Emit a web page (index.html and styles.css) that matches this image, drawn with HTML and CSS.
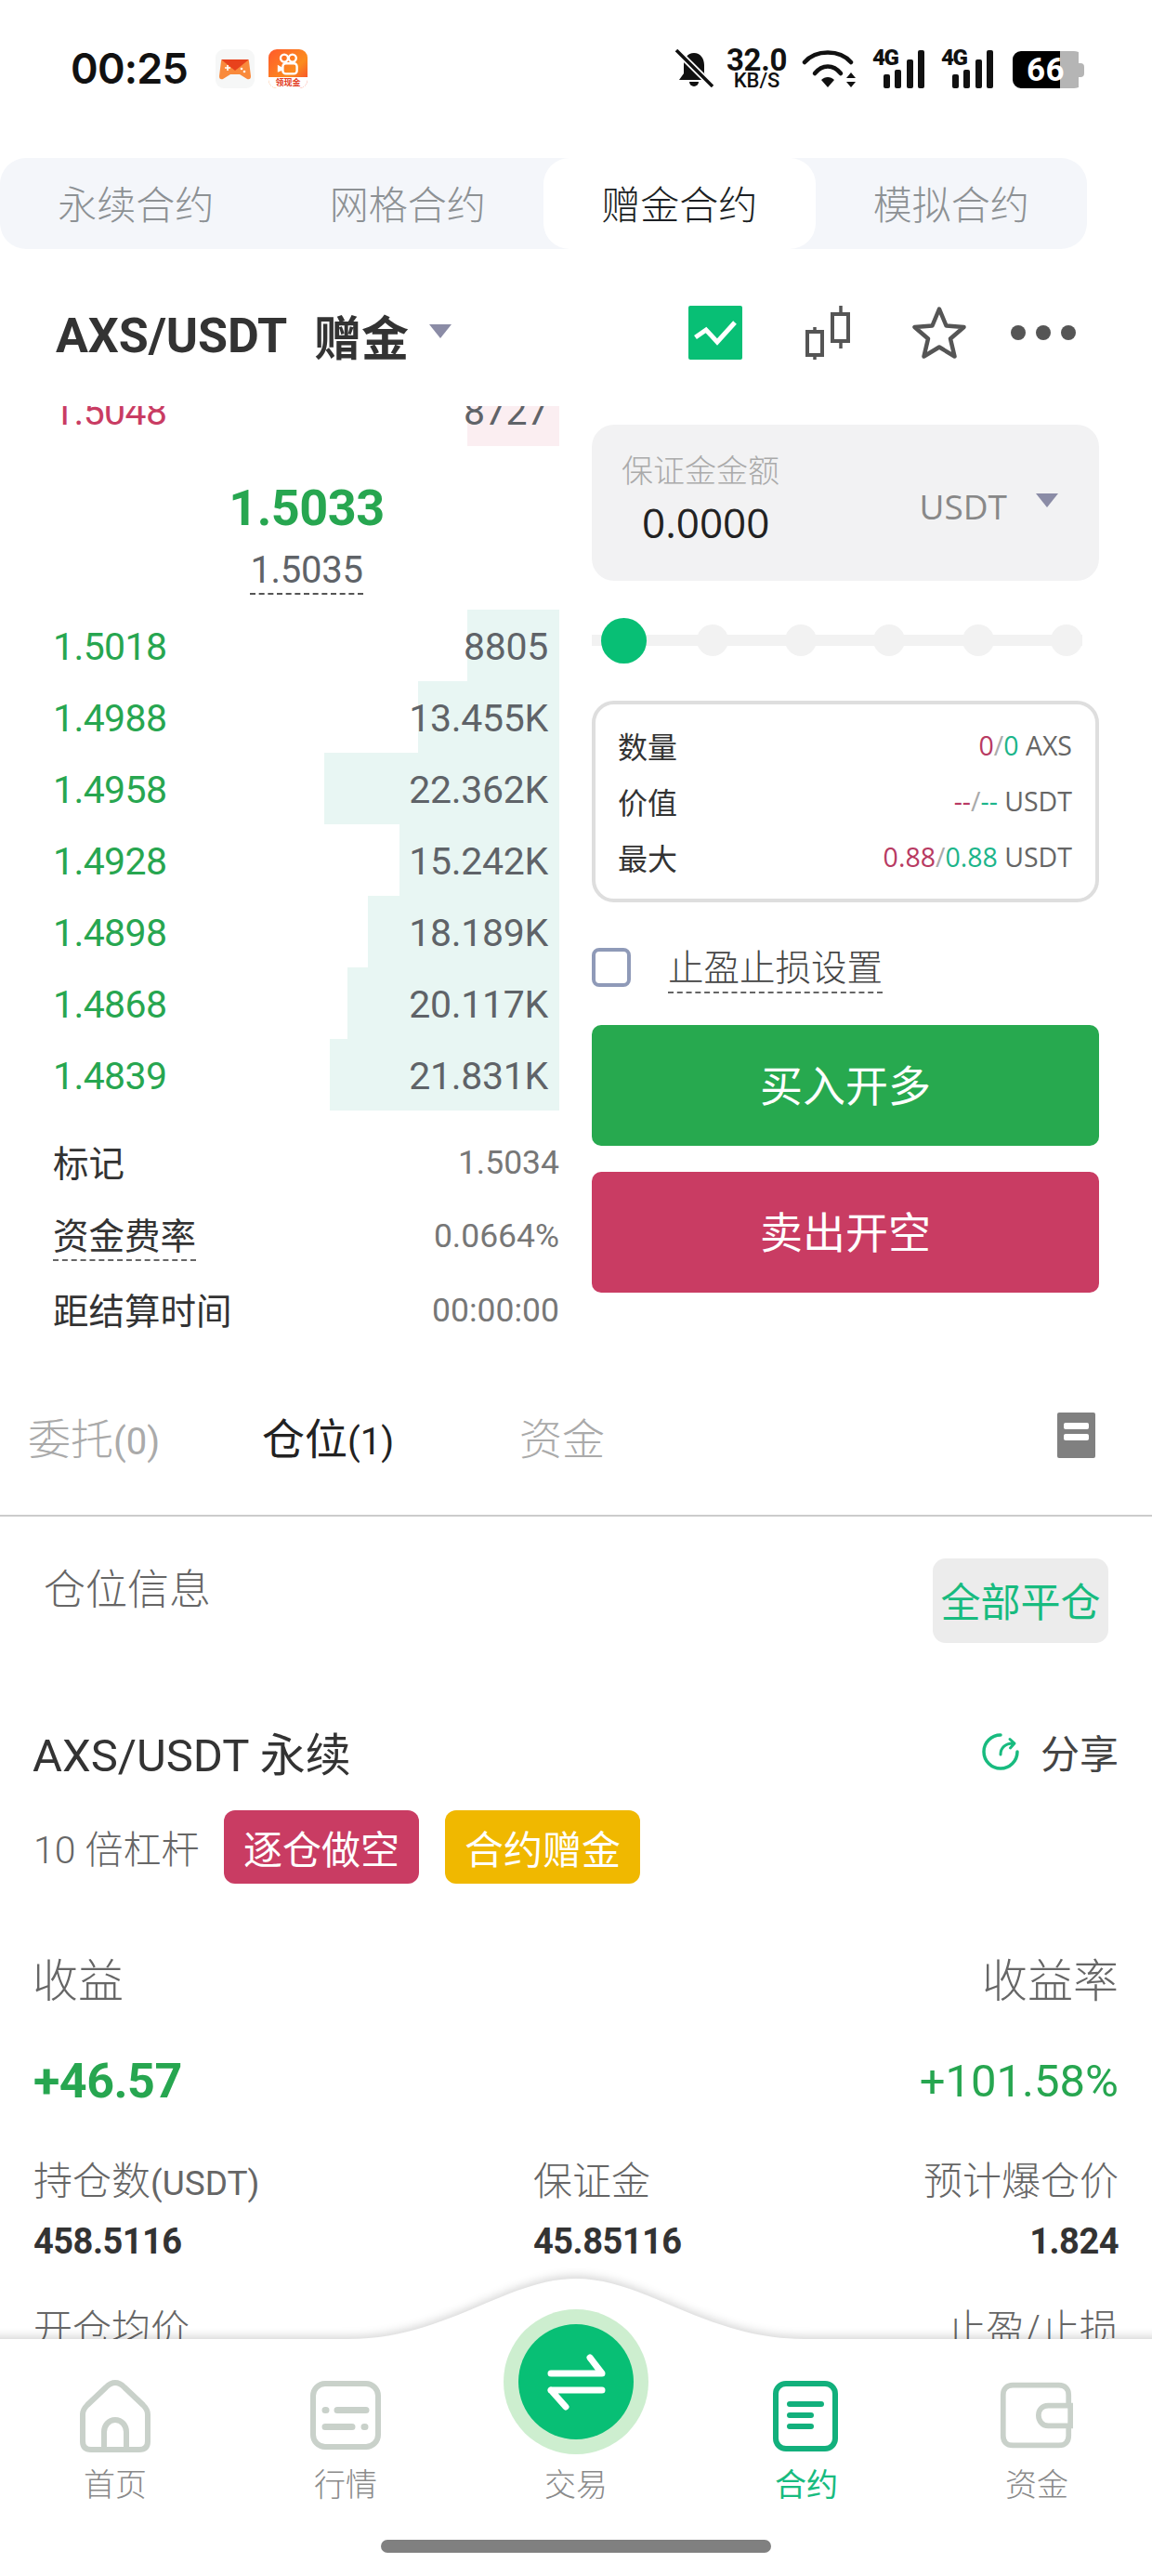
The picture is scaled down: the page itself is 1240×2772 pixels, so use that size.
FILE: index.html
```html
<!DOCTYPE html>
<html lang="zh">
<head>
<meta charset="utf-8">
<title>AXS/USDT 赠金合约</title>
<link rel="stylesheet" href="styles.css">
</head>
<body>
<div class="page">
  <header class="status">
    <div class="status-left">
      <span class="time">00:25</span>
      <svg class="app game" viewBox="0 0 42 42"><rect width="42" height="42" rx="9" fill="#f6f7f7"/><path d="M6 13Q6 11 8 11H34Q36 11 36 13L38 29Q38 33 34 32L26 27H16L8 32Q4 33 4 29Z" fill="#f98a3c"/><path d="M6 11H36L21 23Z" fill="#e8421c"/><path d="M10 20h6M13 17v6" stroke="#fff" stroke-width="1.6"/><circle cx="28" cy="21" r="1.3" fill="#fff"/><circle cx="31" cy="24" r="1.3" fill="#fff"/></svg>
      <div class="app kuai">
        <svg class="kuai-cam" viewBox="0 0 30 32"><circle cx="10" cy="8" r="5" fill="none" stroke="#fff" stroke-width="3"/><circle cx="21" cy="8" r="5" fill="none" stroke="#fff" stroke-width="3"/><rect x="8" y="15" width="19" height="14" rx="4" fill="none" stroke="#fff" stroke-width="3"/><path d="M1 17l7 4v3l-7 3z" fill="#fff"/></svg>
        <span class="kuai-tag">领现金</span>
      </div>
    </div>
    <div class="status-right">
      <svg class="bell" viewBox="0 0 41 41"><path d="M20 4c7 0 11 6 11 13v9l5 7H4l5-7V17C9 10 13 4 20 4Z" fill="#111"/><path d="M15 35h10a5 5 0 0 1-10 0Z" fill="#111"/><path d="M1 1 40 40" stroke="#fff" stroke-width="7"/><path d="M1 1 40 40" stroke="#111" stroke-width="3.5"/></svg>
      <div class="speed"><span class="speed-num">32.0</span><span class="speed-unit">KB/S</span></div>
      <svg class="wifi" viewBox="0 0 58 41"><path d="M3 14C15 0 41 0 53 14" fill="none" stroke="#111" stroke-width="4.5" stroke-linecap="round"/><path d="M14 26C22 16 34 16 42 26" fill="none" stroke="#111" stroke-width="4.5" stroke-linecap="round"/><path d="M21 33C25 29 31 29 35 33L28 41Z" fill="#111"/><path d="M53 25l5 6H48ZM53 41l-5-6h10Z" fill="#111"/></svg>
      <div class="signal"><span class="net">4G</span><span class="bar b1"></span><span class="bar b2"></span><span class="bar b3"></span><span class="bar b4"></span></div>
      <div class="signal"><span class="net">4G</span><span class="bar b1"></span><span class="bar b2"></span><span class="bar b3"></span><span class="bar b4"></span></div>
      <div class="battery"><span>66</span></div>
    </div>
  </header>

  <nav class="tabs">
    <div class="tab">永续合约</div>
    <div class="tab">网格合约</div>
    <div class="tab active">赠金合约</div>
    <div class="tab">模拟合约</div>
  </nav>

  <section class="pair-row">
    <div class="pair"><span class="pair-name">AXS/USDT</span><span class="pair-gift">赠金</span><i class="caret"></i></div>
    <div class="pair-tools">
      <svg class="tool" viewBox="0 0 58 58"><rect width="58" height="58" rx="2" fill="#08bf75"/><path d="M7.5 34 19 26 31 39 50 18" fill="none" stroke="#fff" stroke-width="5"/></svg>
      <svg class="tool candles" viewBox="0 0 48 58"><path d="M10 23V58M38 0V46" stroke="#555" stroke-width="3.5"/><rect x="2" y="28" width="16" height="25" fill="#fff" stroke="#555" stroke-width="4"/><rect x="29" y="9" width="17" height="29" fill="#fff" stroke="#555" stroke-width="4"/></svg>
      <svg class="tool star" viewBox="0 0 58 58"><path d="M29 3.5 36.5 21.5 55.5 23 41 35.5 45.5 54.5 29 44.5 12.5 54.5 17 35.5 2.5 23 21.5 21.5Z" fill="none" stroke="#555" stroke-width="4.5" stroke-linejoin="round"/></svg>
      <div class="more"><i></i><i></i><i></i></div>
    </div>
  </section>

  <main class="trade">
    <div class="left">
      <div class="book">
        <div class="row row-cut"><b class="depth ask depth-top"></b><span class="px red">1.5048</span><span class="qty">8727</span></div>
        <div class="mid">
          <div class="mid-price">1.5033</div>
          <div class="mid-index">1.5035</div>
        </div>
        <div class="row"><b class="depth" style="width:99px"></b><span class="px">1.5018</span><span class="qty">8805</span></div>
        <div class="row"><b class="depth" style="width:152px"></b><span class="px">1.4988</span><span class="qty">13.455K</span></div>
        <div class="row"><b class="depth" style="width:253px"></b><span class="px">1.4958</span><span class="qty">22.362K</span></div>
        <div class="row"><b class="depth" style="width:172px"></b><span class="px">1.4928</span><span class="qty">15.242K</span></div>
        <div class="row"><b class="depth" style="width:206px"></b><span class="px">1.4898</span><span class="qty">18.189K</span></div>
        <div class="row"><b class="depth" style="width:228px"></b><span class="px">1.4868</span><span class="qty">20.117K</span></div>
        <div class="row"><b class="depth" style="width:247px"></b><span class="px">1.4839</span><span class="qty">21.831K</span></div>
      </div>
      <div class="stats">
        <div class="stat"><span>标记</span><em>1.5034</em></div>
        <div class="stat"><span class="dash">资金费率</span><em>0.0664%</em></div>
        <div class="stat"><span>距结算时间</span><em>00:00:00</em></div>
      </div>
    </div>
    <div class="right">
      <div class="amount">
        <div class="amount-col">
          <div class="amount-label">保证金金额</div>
          <div class="amount-val">0.0000</div>
        </div>
        <div class="amount-unit"><span>USDT</span><i class="caret small"></i></div>
      </div>
      <div class="slider"><i class="knob"></i><i></i><i></i><i></i><i></i><i></i></div>
      <div class="info">
        <div class="info-row"><span>数量</span><em><b class="r">0</b><u>/</u><b class="g">0</b> AXS</em></div>
        <div class="info-row"><span>价值</span><em><b class="r">--</b><u>/</u><b class="g">--</b> USDT</em></div>
        <div class="info-row"><span>最大</span><em><b class="r">0.88</b><u>/</u><b class="g">0.88</b> USDT</em></div>
      </div>
      <div class="check"><i class="box"></i><span class="dash">止盈止损设置</span></div>
      <div class="btn buy">买入开多</div>
      <div class="btn sell">卖出开空</div>
    </div>
  </main>

  <section class="sub-tabs">
    <div class="sub-tab t1">委托<small>(0)</small></div>
    <div class="sub-tab t2 on">仓位<small>(1)</small></div>
    <div class="sub-tab">资金</div>
    <svg class="doc" viewBox="0 0 41 49"><rect width="41" height="49" rx="2" fill="#808080"/><rect x="7" y="11" width="27" height="7" rx="2" fill="#fff"/><rect x="7" y="23" width="27" height="7" rx="2" fill="#fff"/></svg>
  </section>

  <section class="pos">
    <div class="pos-head"><div class="pos-title">仓位信息</div><div class="close-all">全部平仓</div></div>
    <div class="pos-name"><div class="symbol">AXS/USDT 永续</div>
      <div class="share"><svg viewBox="0 0 42 42"><path d="M21 3A18 18 0 1 0 39 21" fill="none" stroke="#18bb7f" stroke-width="3.5" stroke-linecap="round"/><path d="M21 24C21 17 26 12 34 12M31 7.5 36 12 31.5 17" fill="none" stroke="#18bb7f" stroke-width="3" stroke-linecap="round" stroke-linejoin="round"/></svg><span>分享</span></div>
    </div>
    <div class="tags"><span class="lev">10 倍杠杆</span><span class="tag t-red">逐仓做空</span><span class="tag t-yellow">合约赠金</span></div>
    <div class="pnl-labels"><span>收益</span><span>收益率</span></div>
    <div class="pnl-vals"><strong>+46.57</strong><span>+101.58%</span></div>
    <div class="grid-labels"><span>持仓数<small>(USDT)</small></span><span>保证金</span><span class="end">预计爆仓价</span></div>
    <div class="grid-vals"><span>458.5116</span><span>45.85116</span><span class="end">1.824</span></div>
    <div class="grid-labels last"><span>开仓均价</span><span>标记价格</span><span class="end">止盈/止损</span></div>
  </section>

  <footer class="tabbar">
    <svg class="hump" viewBox="0 0 1240 322" preserveAspectRatio="none"><path d="M-20 67H375C480 67 545 2 620 2S760 67 865 67H1260V330H-20Z" fill="#fff"/></svg>
    <div class="bar-items">
      <div class="bar-item">
        <svg class="nav-icon" viewBox="0 0 80 80"><path d="M40 4C44 4 47 6 50 9L70 28C73 31 75 34 75 38V67C75 73 72 76 66 76H14C8 76 5 73 5 67V38C5 34 7 31 10 28L30 9C33 6 36 4 40 4Z" fill="none" stroke="#c9d1ca" stroke-width="6"/><path d="M28 75V57C28 50 33 44 40 44S52 50 52 57V75" fill="none" stroke="#c9d1ca" stroke-width="6"/></svg>
        <span>首页</span>
      </div>
      <div class="bar-item">
        <svg class="nav-icon" viewBox="0 0 80 80"><rect x="5" y="5" width="70" height="68" rx="13" fill="none" stroke="#c9d1ca" stroke-width="6"/><path d="M18 33.5h1M31 33.5h31M18 51.5h29M60 51.5h1" stroke="#c9d1ca" stroke-width="7" stroke-linecap="round" fill="none"/></svg>
        <span>行情</span>
      </div>
      <div class="bar-item center">
        <svg class="trade-btn" viewBox="0 0 156 156"><circle cx="78" cy="78" r="78" fill="#cdeecf"/><circle cx="78" cy="78" r="62" fill="#08bf75"/><path d="M51 69H106L93 52M51 87H106M51 87 67 105" fill="none" stroke="#fff" stroke-width="7" stroke-linecap="round" stroke-linejoin="round"/></svg>
        <span>交易</span>
      </div>
      <div class="bar-item on">
        <svg class="nav-icon shift" viewBox="0 0 80 80"><rect x="8" y="5" width="64" height="70" rx="11" fill="none" stroke="#12b07c" stroke-width="6"/><path d="M23 27H57M23 39H46M23 51H46" stroke="#12b07c" stroke-width="6" stroke-linecap="round"/></svg>
        <span>合约</span>
      </div>
      <div class="bar-item">
        <svg class="nav-icon shift" viewBox="0 0 84 80"><path d="M79 26V16C79 9 75 5 68 5H16C9 5 5 9 5 16V62C5 69 9 73 16 73H68C75 73 79 69 79 62V52" fill="none" stroke="#c9d1ca" stroke-width="6"/><path d="M81 28H56C49 28 45 33 45 39S49 51 56 51H81Z" fill="none" stroke="#c9d1ca" stroke-width="6"/></svg>
        <span>资金</span>
      </div>
    </div>
    <div class="home-bar"></div>
  </footer>
</div>
</body>
</html>
```
FILE: styles.css
```css
* { box-sizing: border-box; }
html, body { margin: 0; padding: 0; background: #fff; }
body { font-family: Roboto, "Noto Sans CJK SC", sans-serif; color: #333; }
em, u, small, b, i { font-style: normal; text-decoration: none; font-weight: inherit; font-size: inherit; }
.page { position: relative; width: 1240px; height: 2772px; overflow: hidden; }

/* status bar */
.status { height: 170px; display: flex; justify-content: space-between; align-items: flex-start; padding: 52px 73px 0 76px; }
.status-left { display: flex; align-items: center; height: 44px; }
.time { font-family: Inter, Roboto, sans-serif; font-weight: 600; font-size: 45px; color: #111; letter-spacing: -.8px; line-height: 44px; width: 156px; }
.app { display: block; width: 42px; height: 42px; flex: none; }
.kuai { position: relative; margin-left: 15px; border-radius: 9px; background: linear-gradient(135deg, #ff5a2c, #fb8c1e 60%, #f73b30); overflow: hidden; }
.kuai-cam { position: absolute; left: 9px; top: 3px; width: 24px; height: 26px; }
.kuai-tag { position: absolute; left: 0; right: 0; bottom: 0; height: 12px; color: #e23c22; background: #fff; font-size: 9px; line-height: 12px; text-align: center; font-weight: 700; }
.status-right { display: flex; align-items: flex-start; }
.bell { width: 41px; height: 41px; margin-top: 1px; }
.speed { width: 67px; margin-left: 13px; display: flex; flex-direction: column; align-items: center; color: #111; }
.speed-num { font-weight: 700; font-size: 33px; line-height: 25px; letter-spacing: -.3px; }
.speed-unit { font-weight: 500; font-size: 22px; line-height: 19px; }
.wifi { width: 58px; height: 41px; margin: 1px 0 0 15px; }
.signal { position: relative; width: 56px; height: 42px; margin: 1px 0 0 18px; display: flex; align-items: flex-end; gap: 5.8px; padding-left: 12px; }
.net { position: absolute; left: 0; top: -2px; font-weight: 900; font-size: 24px; line-height: 22px; color: #111; letter-spacing: -1.5px; }
.bar { display: block; width: 6.8px; background: #111; border-radius: 2px; }
.b1 { height: 15px; } .b2 { height: 20px; } .b3 { height: 31px; } .b4 { height: 41px; }
.battery { position: relative; width: 77px; height: 40px; margin: 3px 0 0 21px; border-radius: 9px 11px 11px 9px; background: linear-gradient(90deg, #000 0 51px, #b5b5b5 51px 71px, transparent 71px); display: flex; align-items: center; padding-left: 15px; color: #fff; font-weight: 700; font-size: 35px; letter-spacing: .5px; }
.battery::after { content: ""; position: absolute; right: 0; top: 13px; width: 7px; height: 15px; background: #b5b5b5; border-radius: 0 4px 4px 0; }

/* top tabs */
.tabs { width: 1170px; height: 98px; display: flex; background: #f4f6fa; border-radius: 28px; }
.tab { flex: 1; display: flex; align-items: center; justify-content: center; padding-bottom: 3px; font-size: 42px; color: #8d9194; font-weight: 300; border-radius: 28px; }
.tab.active { background: #fff; color: #1c1f24; }

/* pair row */
.pair-row { height: 169px; padding: 15px 82px 0 60px; display: flex; justify-content: space-between; align-items: center; }
.pair { display: flex; align-items: center; color: #333; margin-top: 2px; }
.pair-name { font-weight: 700; font-size: 52px; letter-spacing: -.1px; width: 278px; }
.pair-gift { font-weight: 700; font-size: 51px; }
.caret { display: block; width: 0; height: 0; margin: -10px 0 0 22px; border-left: 12px solid transparent; border-right: 12px solid transparent; border-top: 15px solid #8b8ca6; }
.caret.small { margin: -12px 0 0 0; }
.pair-tools { display: flex; align-items: center; margin-top: -4px; }
.tool { display: block; width: 58px; height: 58px; }
.candles { width: 48px; margin-left: 68px; }
.star { margin-left: 67px; }
.more { display: flex; gap: 11px; margin-left: 48px; }
.more i { display: block; width: 16px; height: 16px; border-radius: 50%; background: #555; }

/* trade */
.trade { display: grid; grid-template-columns: 602px 546px; column-gap: 35px; }
.book { overflow: hidden; }
.row { position: relative; height: 77px; display: flex; justify-content: space-between; align-items: center; padding: 2px 12px 0 57px; font-size: 41px; }
.row-cut { margin-top: -34px; }
.depth { position: absolute; top: 0; right: 0; bottom: 0; background: #e8f6f3; }
.depth-top { width: 99px; background: #fbeef1; }
.px { position: relative; color: #27a650; letter-spacing: -.6px; }
.px.red { color: #c93c63; }
.qty { position: relative; color: #5f6368; letter-spacing: -.3px; }
.mid { height: 176px; display: flex; flex-direction: column; align-items: center; padding: 32px 0 0 58px; }
.mid-price { font-weight: 700; font-size: 54px; line-height: 70px; color: #27a650; letter-spacing: -.5px; }
.mid-index { margin-top: 9px; font-size: 40px; line-height: 46px; color: #5f6368; letter-spacing: -.3px; border-bottom: 2px dashed #555; padding-bottom: 1px; }
.stats { margin-top: 14px; padding-left: 57px; }
.stat { height: 79.5px; display: flex; justify-content: space-between; align-items: center; font-size: 38.5px; color: #333; font-weight: 400; }
.stat em { font-family: Roboto, sans-serif; font-size: 35.5px; color: #777; margin-top: 4px; }
.dash { border-bottom: 2px dashed #666; line-height: 48px; }
.stat .dash { margin-top: 8px; }

.right { display: flex; flex-direction: column; padding-top: 20px; }
.amount { height: 168px; background: #f2f2f3; border-radius: 24px; display: flex; justify-content: space-between; padding: 28px 44px 0 32px; }
.amount-label { font-size: 34px; line-height: 44px; color: #aaa; font-weight: 300; }
.amount-val { margin: 5px 0 0 22px; font-family: "Open Sans", sans-serif; font-size: 44px; line-height: 56px; color: #222; }
.amount-unit { display: flex; align-items: center; gap: 31px; height: 118px; font-family: "Open Sans", sans-serif; font-size: 37px; color: #888; }
.slider { height: 50px; width: 528px; margin-top: 39px; display: flex; justify-content: space-between; align-items: center; padding-left: 17.5px; background: linear-gradient(#f2f2f2, #f2f2f2) center / 100% 12px no-repeat; }
.slider i { display: block; width: 34px; height: 34px; border-radius: 50%; background: #f2f2f2; }
.slider .knob { width: 49px; height: 49px; background: #08bf75; margin: 0 -7.5px; }
.info { height: 217px; margin-top: 40px; border: 4px solid #dedede; border-radius: 24px; padding: 14px 25px 0 24px; }
.info-row { height: 60px; display: flex; justify-content: space-between; align-items: center; font-size: 32px; color: #333; }
.info-row em { font-family: "Open Sans", sans-serif; font-size: 28.5px; color: #666; }
.info-row .r { color: #b83a62; }
.info-row .g { color: #1cb58a; }
.info-row u { color: #aaa; }
.check { height: 42px; margin-top: 49px; display: flex; align-items: center; gap: 40px; font-size: 38.5px; color: #444; font-weight: 300; }
.box { display: block; width: 42px; height: 42px; border: 4px solid #8f9ab8; border-radius: 8px; }
.check .dash { line-height: 50px; margin-top: 4px; }
.btn { height: 130px; display: flex; align-items: center; justify-content: center; padding-bottom: 7px; border-radius: 10px; color: #fff; font-size: 46px; }
.buy { margin-top: 41px; background: #27a94f; }
.sell { margin-top: 28px; background: #c93c63; }

/* sub tabs */
.sub-tabs { height: 182px; padding: 12px 61px 2px 30px; display: flex; align-items: center; border-bottom: 2px solid #ccc; margin-top: 2px; font-size: 46px; color: #aaa; font-weight: 300; }
.sub-tab small { font-family: Roboto, sans-serif; font-size: 40px; font-weight: 400; }
.sub-tab.t1 { width: 252px; }
.sub-tab.t2 { width: 277px; }
.sub-tab.on { color: #222; font-weight: 400; }
.doc { width: 41px; height: 49px; margin-left: auto; }

/* position */
.pos { padding: 0 36px; }
.pos-head { margin-top: 45px; height: 91px; padding: 0 11px; display: flex; justify-content: space-between; align-items: flex-start; }
.pos-title { font-size: 45px; line-height: 70px; color: #666; font-weight: 300; }
.close-all { width: 189px; height: 91px; padding-bottom: 2px; background: #ececec; border-radius: 14px; display: flex; align-items: center; justify-content: center; color: #18bb7f; font-size: 43px; }
.pos-name { margin-top: 87px; height: 60px; display: flex; justify-content: space-between; align-items: center; }
.symbol { font-size: 49px; color: #333; margin-left: -1px; }
.share { display: flex; align-items: center; gap: 22px; font-size: 42px; color: #444; }
.share svg { width: 42px; height: 42px; display: block; }
.tags { margin-top: 33px; height: 79px; display: flex; align-items: center; }
.lev { width: 205px; font-size: 41px; color: #666; font-weight: 300; }
.tag { width: 210px; height: 79px; margin-right: 28px; border-radius: 12px; color: #fff; font-size: 42px; display: flex; align-items: center; justify-content: center; }
.t-red { background: #c93c63; }
.t-yellow { background: #f0b800; }
.pnl-labels { margin-top: 71px; height: 60px; display: flex; justify-content: space-between; align-items: center; font-size: 49px; color: #666; font-weight: 300; margin-left: -1px; }
.pnl-vals { margin-top: 51px; height: 60px; display: flex; justify-content: space-between; align-items: center; color: #27a650; padding-top: 2px; }
.pnl-vals strong { font-size: 52px; font-weight: 700; letter-spacing: -.5px; }
.pnl-vals span { font-size: 49px; }
.grid-labels, .grid-vals { display: grid; grid-template-columns: 538px 1fr auto; align-items: center; }
.grid-labels { margin-top: 44px; height: 50px; font-size: 42px; color: #666; font-weight: 300; }
.grid-labels small { font-size: 37px; font-weight: 400; font-family: Roboto, sans-serif; }
.grid-vals { margin-top: 27px; height: 44px; font-size: 38px; font-weight: 700; color: #333; letter-spacing: -.5px; }
.grid-labels.last { margin-top: 38px; }
.end { text-align: right; }

/* bottom bar */
.tabbar { position: absolute; left: 0; bottom: 0; width: 1240px; height: 322px; }
.hump { position: absolute; left: 0; top: 0; width: 100%; height: 100%; filter: drop-shadow(0 -3px 5px rgba(0, 0, 0, .16)); overflow: visible; }
.bar-items { position: relative; display: grid; grid-template-columns: repeat(5, 1fr); padding-top: 110px; }
.bar-item { display: flex; flex-direction: column; align-items: center; font-size: 34px; color: #8a8a8a; font-weight: 300; }
.bar-item span { margin-top: 11px; line-height: 46px; }
.nav-icon { display: block; width: 80px; height: 80px; }
.nav-icon.shift { margin-left: -3px; }
.trade-btn { display: block; width: 156px; height: 156px; margin-top: -75px; margin-bottom: -1px; }
.bar-item.on { color: #18bb7f; font-weight: 400; }
.home-bar { position: absolute; left: 410px; bottom: 25px; width: 420px; height: 14px; border-radius: 7px; background: #808080; }
```
